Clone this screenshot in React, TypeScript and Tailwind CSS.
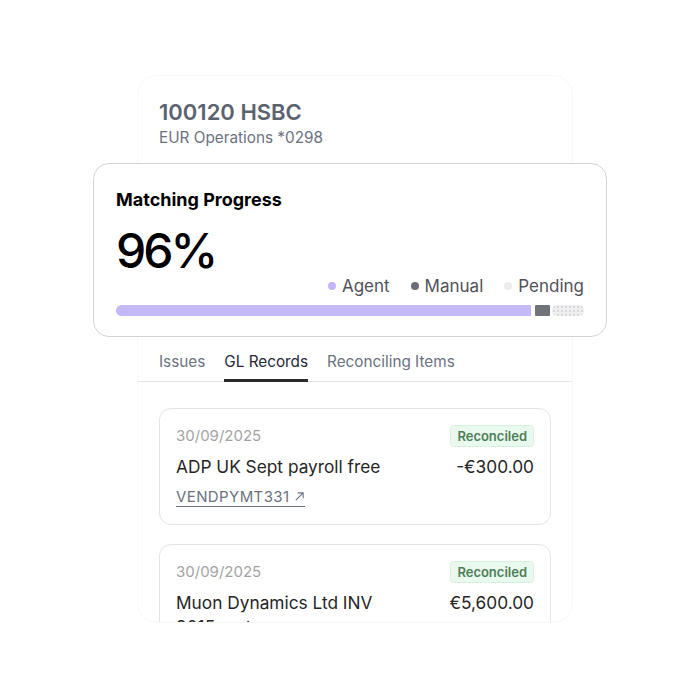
import React from "react";

function Badge() {
  return (
    <span className="rounded-[4px] border border-[#d6f2dc] bg-[#e9f9ed] px-[6px] text-[13px] font-semibold leading-[20px] text-[#4f7d5a]">
      Reconciled
    </span>
  );
}

function RecordCard({
  title,
  amount,
  link,
}: {
  title: string;
  amount: string;
  link?: string;
}) {
  return (
    <div className="mx-[21px] rounded-[12px] border border-[#e4e4e7] bg-white px-[16px] pb-[17px] pt-[16px]">
      <div className="flex h-[22px] items-center justify-between">
        <span className="text-[15px] leading-[20px] text-[#a3a3a3]">30/09/2025</span>
        <Badge />
      </div>
      <div className="mt-[8px] flex justify-between gap-4 text-[17.3px] leading-[24px] text-[#262626]">
        <span className="max-w-[215px]">{title}</span>
        <span>{amount}</span>
      </div>
      {link && (
        <div className="mt-[8px] flex">
          <span className="flex items-center gap-[4px] border-b border-[#6b7280] text-[15px] leading-[19px] tracking-[0.4px] text-[#6b7280]">
            {link}
            <svg width="11" height="11" viewBox="0 0 12 12" fill="none" stroke="#6b7280" strokeWidth="1.2">
              <path d="M2 10L10 2M4 2h6v6" />
            </svg>
          </span>
        </div>
      )}
    </div>
  );
}

export default function App() {
  return (
    <div className="h-[700px] w-[700px] overflow-hidden bg-white pt-[75px] font-['Inter',sans-serif]">
      <div className="ml-[137px] flex h-[548px] w-[436px] flex-col rounded-[20px] border border-[#f8f8f9] bg-white">
        <div className="px-[21px] pt-[22px]">
          <div className="text-[22px] font-semibold leading-[28px] text-[#5b6270]">100120 HSBC</div>
          <div className="mt-[2px] text-[15.3px] leading-[20px] text-[#6b7280]">EUR Operations *0298</div>
        </div>
        <div className="-ml-[45px] -mr-[35px] mt-[15px] h-[174px] rounded-[16px] border border-[#d4d4d8] bg-white px-[22px] pt-[24px]">
          <div className="text-[18px] font-bold leading-[24px] text-black">Matching Progress</div>
          <div className="mt-[15px] text-[48px] font-medium leading-[48px] tracking-[-3px] text-black">96%</div>
          <div className="-mt-px flex items-center justify-end gap-[21px] text-[17px] leading-[24px] text-[#52525b]">
            <span className="flex items-center gap-[6px]">
              <span className="h-[8px] w-[8px] rounded-full bg-[#c4b5fd]" />
              Agent
            </span>
            <span className="flex items-center gap-[6px]">
              <span className="h-[8px] w-[8px] rounded-full bg-[#6b6e76]" />
              Manual
            </span>
            <span className="flex items-center gap-[6px]">
              <span className="h-[8px] w-[8px] rounded-full bg-[#ececec]" />
              Pending
            </span>
          </div>
          <div className="mt-[7px] flex h-[11px] items-stretch">
            <div className="w-[415px] rounded-l-full bg-[#c4b8f8]" />
            <div className="ml-[4px] w-[15px] rounded-[1px] bg-[#71737a]" />
            <div className="ml-[2px] flex-1 rounded-full bg-[#efefef] bg-[radial-gradient(#d8d8e0_0.8px,transparent_1px)] bg-[length:4px_4px]" />
          </div>
        </div>
        <div className="mt-[15px] flex gap-[19px] border-b border-[#e5e7eb] px-[21px] text-[15.3px] leading-[20px]">
          <span className="pb-[9px] text-[#6b7280]">Issues</span>
          <span className="-mb-px border-b-[3px] border-[#2b2b2b] pb-[7px] text-[#1f2937]">GL Records</span>
          <span className="pb-[9px] text-[#6b7280]">Reconciling Items</span>
        </div>
        <div className="mt-[26px] flex min-h-0 flex-1 flex-col gap-[19px] overflow-hidden rounded-b-[20px]">
          <RecordCard title="ADP UK Sept payroll free" amount="-€300.00" link="VENDPYMT331" />
          <RecordCard title="Muon Dynamics Ltd INV 9015 pmt" amount="€5,600.00" />
        </div>
      </div>
    </div>
  );
}
